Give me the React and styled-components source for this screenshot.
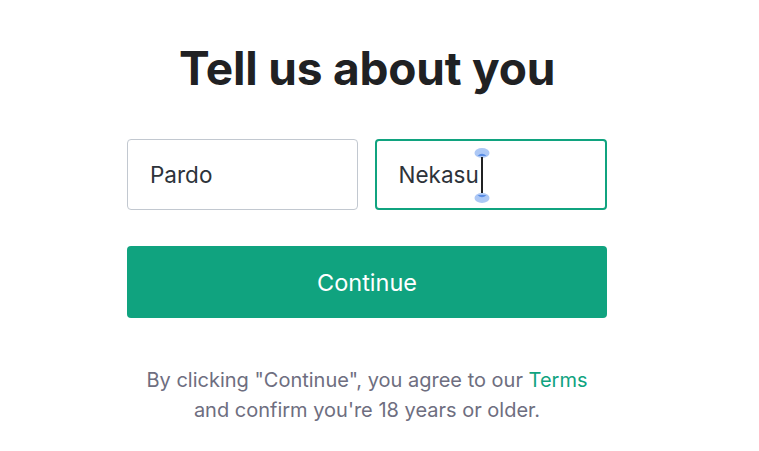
import React from 'react';
import styled, { createGlobalStyle } from 'styled-components';

const Global = createGlobalStyle`
  html, body {
    margin: 0;
    padding: 0;
    background: #ffffff;
  }
  body {
    font-family: 'Inter', 'Liberation Sans', sans-serif;
  }
`;

const Page = styled.main`
  width: 734px;
  display: flex;
  flex-direction: column;
  align-items: center;
  padding-top: 38px;
`;

const Title = styled.h1`
  margin: 0;
  font-size: 46px;
  line-height: 60px;
  font-weight: 700;
  color: #202123;
  letter-spacing: -0.2px;
`;

const Form = styled.div`
  width: 480px;
  display: flex;
  flex-direction: column;
  margin-top: 41px;
`;

const Row = styled.div`
  display: flex;
  gap: 17px;
`;

const Field = styled.div`
  position: relative;
  flex: 1;
  height: 71px;
  box-sizing: border-box;
  border: ${(p) => (p.focused ? '2px solid #10a37f' : '1px solid #c2c8d0')};
  border-radius: 4px;
  display: flex;
  align-items: center;
  padding-left: 22px;
  font-size: 22.5px;
  color: #2d333a;
`;

const Caret = styled.svg`
  position: absolute;
  top: 6px;
  left: 97px;
`;

const Button = styled.button`
  margin-top: 36px;
  height: 72px;
  border: none;
  border-radius: 4px;
  background: #10a37f;
  color: #ffffff;
  font-family: inherit;
  font-size: 23.5px;
  cursor: pointer;
`;

const Legal = styled.p`
  margin: 47px 0 0;
  text-align: center;
  font-size: 20px;
  line-height: 30px;
  color: #6e6e80;
`;

const Link = styled.a`
  color: #10a37f;
  text-decoration: none;
`;

export default function App() {
  return (
    <>
      <Global />
      <Page>
        <Title>Tell us about you</Title>
        <Form>
          <Row>
            <Field>Pardo</Field>
            <Field focused>
              Nekasu
              <Caret width="16" height="62" viewBox="0 0 16 62">
                <ellipse cx="8" cy="6" rx="7.5" ry="5" fill="#adc8f5" />
                <path d="M3.5 9 Q8 4.5 12.5 9 Z" fill="#5b8ee6" />
                <ellipse cx="8" cy="51" rx="7.5" ry="5" fill="#adc8f5" />
                <path d="M3.5 48 Q8 52.5 12.5 48 Z" fill="#5b8ee6" />
                <rect x="7" y="10" width="2" height="36" fill="#202123" />
              </Caret>
            </Field>
          </Row>
          <Button>Continue</Button>
        </Form>
        <Legal>
          By clicking "Continue", you agree to our <Link href="#">Terms</Link>
          <br />
          and confirm you're 18 years or older.
        </Legal>
      </Page>
    </>
  );
}
